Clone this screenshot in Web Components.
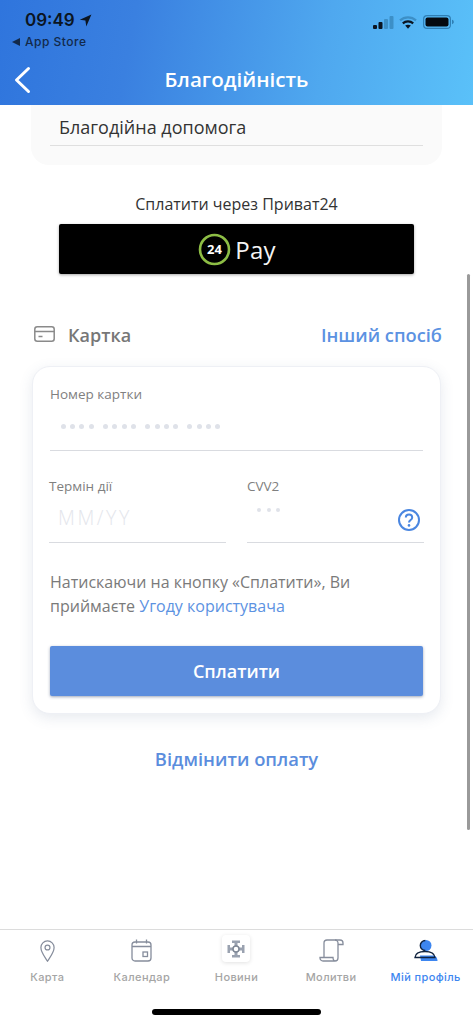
<!DOCTYPE html>
<html lang="uk">
<head>
<meta charset="utf-8">
<title>Благодійність</title>
<style>
  html, body { margin: 0; padding: 0; background: #fff; }
  body { font-family: "Open Sans", "Liberation Sans", sans-serif; }
  charity-screen { height: 1024px; }
</style>
</head>
<body>
<charity-screen>
  <status-bar slot="top"></status-bar>
  <app-header slot="top">Благодійність</app-header>
  <donation-field>Благодійна допомога</donation-field>
  <privat-pay>Сплатити через Приват24</privat-pay>
  <card-heading></card-heading>
  <card-form></card-form>
  <cancel-link>Відмінити оплату</cancel-link>
  <tab-bar slot="bottom"></tab-bar>
</charity-screen>

<script>
class CharityScreen extends HTMLElement {
  constructor() {
    super();
    this.shadowDOM = this.attachShadow({ mode: "open" });
  }
  connectedCallback() {
    this.shadowDOM.innerHTML = `
      <style>
        :host { display: flex; flex-direction: column; width: 473px; overflow: hidden; }
        .top { background: linear-gradient(100deg, #2f75dd 0%, #3a80e0 28%, #4fa8ef 68%, #5ac1f9 100%); flex: none; }
        .scroll { flex: 1; position: relative; overflow: hidden; min-height: 0; }
        .thumb { position: absolute; left: 467px; top: 169px; width: 3px; height: 556px; background: #9a9a9a; border-radius: 2px; }
      </style>
      <div class="top"><slot name="top"></slot></div>
      <div class="scroll"><slot></slot><div class="thumb"></div></div>
      <slot name="bottom"></slot>`;
  }
}

class StatusBar extends HTMLElement {
  constructor() {
    super();
    this.shadowDOM = this.attachShadow({ mode: "open" });
  }
  connectedCallback() {
    this.shadowDOM.innerHTML = `
      <style>
        :host { display: flex; justify-content: space-between; height: 56px; padding: 9px 19px 0 25px; box-sizing: border-box; font-family: Inter, "Liberation Sans", sans-serif; }
        .time { display: flex; align-items: center; gap: 4px; font-size: 17px; font-weight: 600; color: #0b1522; line-height: 22px; }
        .back { font-size: 12px; color: #12294a; line-height: 16px; margin: 3px 0 0 -13px; letter-spacing: .5px; font-weight: 500; display: flex; align-items: center; gap: 5px; }
        .back svg { display: block; }
        .icons { display: flex; align-items: center; gap: 6px; height: 22px; margin-top: 2px; }
        .signal { margin-right: -1px; }
        svg { display: block; flex: none; }
      </style>
      <div>
        <div class="time">09:49
          <svg width="13" height="13" viewBox="0 0 13 13"><path d="M12.4 .6 .8 5.8l5.6.8.9 5.8z" fill="#0b1522"/></svg>
        </div>
        <div class="back">
          <svg width="8" height="8" viewBox="0 0 8 8"><path d="M0 4 8 0v8z" fill="#12294a"/></svg>App Store
        </div>
      </div>
      <div class="icons">
        <svg class="signal" width="21" height="13" viewBox="0 0 21 13">
          <rect x="0" y="9" width="4" height="4" rx="1" fill="#0b1522"/>
          <rect x="5.500" y="6" width="4" height="7" rx="1" fill="#0b1522"/>
          <rect x="11" y="3" width="4" height="10" rx="1" fill="#3c8fc7"/>
          <rect x="16.500" y="0" width="4" height="13" rx="1" fill="#3c8fc7"/>
        </svg>
        <svg width="18" height="13" viewBox="0 0 18 13">
          <path d="M1 4.400C5.500.3 12.500.3 17 4.400" fill="none" stroke="#3c8fc7" stroke-width="2.200"/>
          <path d="M3.800 7.300C6.700 4.800 11.300 4.800 14.200 7.300" fill="none" stroke="#0b1522" stroke-width="2.200"/>
          <path d="M6.200 9.600C7.800 8.300 10.200 8.300 11.800 9.600L9 12.800z" fill="#0b1522"/>
        </svg>
        <svg width="31" height="14" viewBox="0 0 31 14">
          <rect x=".6" y=".6" width="26.800" height="12.800" rx="3.500" fill="none" stroke="#2f7fb5" stroke-width="1.200"/>
          <rect x="2.500" y="2.500" width="23" height="9" rx="2" fill="#050a10"/>
          <path d="M29 4.800c1.200.3 1.800 1.200 1.800 2.200s-.6 1.900-1.800 2.200z" fill="#2f7fb5"/>
        </svg>
      </div>`;
  }
}

class AppHeader extends HTMLElement {
  constructor() {
    super();
    this.shadowDOM = this.attachShadow({ mode: "open" });
  }
  connectedCallback() {
    this.shadowDOM.innerHTML = `
      <style>
        :host { display: flex; align-items: center; justify-content: center; position: relative; height: 49px; padding-bottom: 3px; box-sizing: border-box; color: #fff; font-size: 20.600px; font-weight: 600; }
        svg { position: absolute; left: 13px; top: 10px; }
      </style>
      <svg width="18" height="28" viewBox="0 0 18 28"><path d="M15.500 2.500 3.500 14l12 11.500" fill="none" stroke="#fff" stroke-width="3" stroke-linecap="round" stroke-linejoin="round"/></svg>
      <slot></slot>`;
  }
}

class DonationField extends HTMLElement {
  constructor() {
    super();
    this.shadowDOM = this.attachShadow({ mode: "open" });
  }
  connectedCallback() {
    this.shadowDOM.innerHTML = `
      <style>
        :host { display: block; margin: 0 31px; height: 60px; padding: 0 19px; box-sizing: border-box; background: #fafafa; border-radius: 0 0 18px 18px; }
        div { height: 41px; box-sizing: border-box; border-bottom: 1px solid #dfdfdf; padding: 10px 0 0 9px; font-size: 18px; line-height: 24px; color: #333; }
      </style>
      <div><slot></slot></div>`;
  }
}

class PrivatPay extends HTMLElement {
  constructor() {
    super();
    this.shadowDOM = this.attachShadow({ mode: "open" });
  }
  connectedCallback() {
    this.shadowDOM.innerHTML = `
      <style>
        :host { display: block; padding-top: 28px; text-align: center; }
        .caption { font-size: 16px; line-height: 22px; color: #333; }
        .btn { margin: 9px 59px 0; height: 50px; background: #000; border-radius: 2px; box-shadow: 0 1px 3px rgba(0,0,0,.35); display: flex; align-items: center; justify-content: center; gap: 4px; padding-left: 1px; }
        svg { display: block; }
        .pay { color: #f4f4f4; font-size: 24px; line-height: 30px; letter-spacing: .3px; margin-top: 2px; }
        text { font-family: "Open Sans", "Liberation Sans", sans-serif; }
      </style>
      <div class="caption"><slot></slot></div>
      <div class="btn">
        <svg width="33" height="33" viewBox="0 0 33 33">
          <circle cx="16.500" cy="16.500" r="14.500" fill="#000" stroke="#8dbd45" stroke-width="2.600"/>
          <text x="16.500" y="21" text-anchor="middle" font-size="13" font-weight="700" fill="#fff">24</text>
        </svg>
        <span class="pay">Pay</span>
      </div>`;
  }
}

class CardHeading extends HTMLElement {
  constructor() {
    super();
    this.shadowDOM = this.attachShadow({ mode: "open" });
  }
  connectedCallback() {
    this.shadowDOM.innerHTML = `
      <style>
        :host { display: flex; align-items: center; margin-top: 48px; padding: 0 31px 0 34px; height: 26px; font-size: 18px; line-height: 26px; font-weight: 600; }
        svg { display: block; margin-right: 13px; margin-top: -3px; }
        .title { color: #777; flex: 1; }
        .other { color: #5c92e2; font-size: 18.300px; }
      </style>
      <svg width="21" height="16" viewBox="0 0 21 16" fill="none" stroke="#8a8a8a" stroke-width="1.500">
        <rect x=".8" y=".8" width="19.400" height="14.400" rx="2.500"/>
        <path d="M.8 5.500h19.400M4.500 10.500h4" />
      </svg>
      <span class="title">Картка</span>
      <span class="other">Інший спосіб</span>`;
  }
}

class FormField extends HTMLElement {
  constructor() {
    super();
    this.shadowDOM = this.attachShadow({ mode: "open" });
  }
  connectedCallback() {
    this.shadowDOM.innerHTML = `
      <style>
        :host { display: block; position: relative; border-bottom: 1px solid #d9dbe0; box-sizing: border-box; height: 66px; font-size: 13.500px; line-height: 18px; color: #808080; }
        .value { padding-left: 9px; height: 40px; }
        ::slotted(svg) { position: absolute; right: 3px; bottom: 10px; }
      </style>
      <div>${this.getAttribute("label")}</div>
      <div class="value"><slot name="value"></slot></div>
      <slot name="icon"></slot>`;
  }
}

class CardForm extends HTMLElement {
  constructor() {
    super();
    this.shadowDOM = this.attachShadow({ mode: "open" });
  }
  connectedCallback() {
    const dotGroup = "<i></i><i></i><i></i><i></i>";
    this.shadowDOM.innerHTML = `
      <style>
        :host { display: block; margin: 18px 32px 0 32px; height: 348px; box-sizing: border-box; padding: 18px 17px 0 17px; background: #fff; border-radius: 18px; border: 1px solid #eef0f5; box-shadow: 0 4px 14px rgba(70,90,130,.13); }
        .row { display: grid; grid-template-columns: 177px 177px; column-gap: 21px; margin: 26px -1px 0 -1px; }
        .dots { display: flex; gap: 9.600px; padding: 21px 0 0 2px; }
        .dots span { display: flex; gap: 4.200px; }
        .dots i { width: 5px; height: 5px; }
        i { display: block; border-radius: 50%; background: #dfe2e9; }
        .mm { font-size: 19.500px; line-height: 24px; letter-spacing: 2.600px; color: #e4e6ec; padding-top: 11px; font-weight: 300; }
        .cvv { display: flex; gap: 5.500px; padding: 13px 0 0 1px; }
        .cvv i { width: 4px; height: 4px; }
        .note { margin-top: 27px; font-size: 16px; line-height: 24px; color: #7a7a7a; }
        a { color: #5c92e2; text-decoration: none; }
        button { display: block; width: 100%; height: 50px; margin-top: 28px; border: 0; border-radius: 2px; background: #5b8ddd; color: #fff; font: 600 18px "Open Sans", "Liberation Sans", sans-serif; box-shadow: 0 1px 3px rgba(40,60,100,.45); }
      </style>
      <form-field label="Номер картки">
        <div slot="value" class="dots">
          <span>${dotGroup}</span><span>${dotGroup}</span><span>${dotGroup}</span><span>${dotGroup}</span>
        </div>
      </form-field>
      <div class="row">
        <form-field label="Термін дії"><div slot="value" class="mm">MM/YY</div></form-field>
        <form-field label="CVV2">
          <div slot="value" class="cvv"><i></i><i></i><i></i></div>
          <svg slot="icon" width="24" height="24" viewBox="0 0 24 24" fill="none">
            <circle cx="12" cy="12" r="10" stroke="#4a86e0" stroke-width="2"/>
            <path d="M8.800 9.600c0-2 1.400-3.100 3.200-3.100s3.200 1.100 3.200 2.900c0 2.700-3.200 2.500-3.200 5.200" stroke="#4a86e0" stroke-width="2"/>
            <circle cx="12" cy="17.400" r="1.300" fill="#4a86e0"/>
          </svg>
        </form-field>
      </div>
      <div class="note">
        <div>Натискаючи на кнопку «Сплатити», Ви</div>
        <div>приймаєте <a>Угоду користувача</a></div>
      </div>
      <button type="button">Сплатити</button>`;
  }
}

class CancelLink extends HTMLElement {
  constructor() {
    super();
    this.shadowDOM = this.attachShadow({ mode: "open" });
  }
  connectedCallback() {
    this.shadowDOM.innerHTML = `
      <style>
        :host { display: block; margin-top: 32px; text-align: center; color: #5b8ddd; font-size: 18.400px; font-weight: 600; line-height: 26px; }
      </style>
      <slot></slot>`;
  }
}

class TabItem extends HTMLElement {
  constructor() {
    super();
    this.shadowDOM = this.attachShadow({ mode: "open" });
  }
  connectedCallback() {
    this.shadowDOM.innerHTML = `
      <style>
        :host { display: flex; flex-direction: column; align-items: center; color: #a5a5a5; font-size: 11px; font-weight: 500; letter-spacing: .4px; line-height: 14px; font-family: Inter, "Liberation Sans", sans-serif; white-space: nowrap; }
        :host([active]) { color: #3d86f0; }
        .ico { height: 30px; display: flex; align-items: flex-end; justify-content: center; margin-bottom: 8px; }
      </style>
      <div class="ico"><slot name="icon"></slot></div>
      <slot></slot>`;
  }
}

class TabBar extends HTMLElement {
  constructor() {
    super();
    this.shadowDOM = this.attachShadow({ mode: "open" });
  }
  connectedCallback() {
    this.shadowDOM.innerHTML = `
      <style>
        :host { display: block; flex: none; height: 95px; box-sizing: border-box; border-top: 1px solid #dcdcdc; background: #fff; position: relative; }
        nav { display: grid; grid-template-columns: repeat(5, 1fr); padding-top: 2px; }
        .tile { width: 28px; height: 27px; background: #fff; border-radius: 4px; box-shadow: 0 1px 4px rgba(0,0,0,.12); display: flex; align-items: center; justify-content: center; }
        svg { display: block; }
        .home { position: absolute; left: 152px; top: 79px; width: 169px; height: 6px; border-radius: 3px; background: #000; }
      </style>
      <nav>
        <tab-item>
          <svg slot="icon" width="15" height="22" viewBox="0 0 17 25" fill="none" stroke="#868d9c" stroke-width="1.400">
            <path d="M8.500 24C5 18.500 1 14 1 8.500a7.500 7.500 0 0 1 15 0C16 14 12 18.500 8.500 24z"/>
            <circle cx="8.500" cy="8.500" r="2.800"/>
          </svg>Карта</tab-item>
        <tab-item>
          <svg slot="icon" width="21" height="23" viewBox="0 0 21 23" fill="none" stroke="#868d9c" stroke-width="1.300">
            <rect x="1" y="3" width="19" height="19" rx="3"/>
            <path d="M1 7.500h19M5.500 .5v4M15.500 .5v4"/>
            <rect x="12" y="13" width="4.500" height="4.500"/>
          </svg>Календар</tab-item>
        <tab-item>
          <div slot="icon" class="tile">
            <svg width="18" height="18" viewBox="0 0 18 18" fill="#9aa2b0">
              <path d="M5 .5h8v2.500h-2.500v3h-3v-3H5zM5 17.500h8V15h-2.500v-3h-3v3H5zM.5 5v8H3v-2.500h3v-3H3V5zM17.500 5v8H15v-2.500h-3v-3h3V5z"/>
              <circle cx="9" cy="9" r="3" fill="#fff" stroke="#7d8694" stroke-width="1.500"/>
            </svg>
          </div>Новини</tab-item>
        <tab-item>
          <svg slot="icon" width="25" height="23" viewBox="0 0 25 23" fill="none" stroke="#868d9c" stroke-width="1.300">
            <path d="M5 18.500V4a3 3 0 0 1 3-3h13a3 3 0 0 1 3 3v1.500h-5"/>
            <path d="M19 5.500V4a3 3 0 0 0-3-3M19 5.500V19a3 3 0 0 1-3 3H4a3 3 0 0 1-3-3v-.5h13v.5a3 3 0 0 0 2 3"/>
          </svg>Молитви</tab-item>
        <tab-item active>
          <svg slot="icon" width="24" height="24" viewBox="0 0 24 24">
            <path d="M1 19.500c.3-4 4.500-6 10-6s9.500 2 10 6z" fill="#fff"/>
            <circle cx="12" cy="7.500" r="5.500" fill="#3d86f0"/>
            <path d="M6 17.500h13c2.500 0 4.500 2 4.500 5.500H7z" fill="#3d86f0"/>
            <path d="M11.300 2.500a5 5 0 0 0 0 10" fill="none" stroke="#10233f" stroke-width="1.400"/>
            <path d="M1 19.500c.3-4 4.500-6 10-6s9.500 2 10 6z" fill="none" stroke="#10233f" stroke-width="1.400"/>
          </svg>Мій профіль</tab-item>
      </nav>
      <div class="home"></div>`;
  }
}

customElements.define("charity-screen", CharityScreen);
customElements.define("status-bar", StatusBar);
customElements.define("app-header", AppHeader);
customElements.define("donation-field", DonationField);
customElements.define("privat-pay", PrivatPay);
customElements.define("card-heading", CardHeading);
customElements.define("form-field", FormField);
customElements.define("card-form", CardForm);
customElements.define("cancel-link", CancelLink);
customElements.define("tab-item", TabItem);
customElements.define("tab-bar", TabBar);
</script>
</body>
</html>
